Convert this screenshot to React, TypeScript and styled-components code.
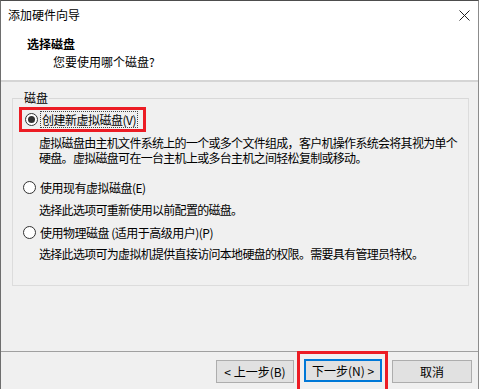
import React, { ReactElement } from "react";
import styled, { createGlobalStyle } from "styled-components";

const GlobalStyle = createGlobalStyle`
  html, body {
    margin: 0;
    padding: 0;
    background: #ffffff;
  }
  body {
    font-family: "Noto Sans CJK SC", "Liberation Sans", sans-serif;
    font-size: 12px;
    color: #000000;
  }
`;

const Window = styled.div`
  width: 479px;
  height: 389px;
  box-sizing: border-box;
  border-top: 1px solid #4d4d4d;
  border-left: 1px solid #6e6e6e;
  border-right: 1px solid #8c8c8c;
  background: #f0f0f0;
  display: flex;
  flex-direction: column;
  overflow: hidden;
`;

const Header = styled.div`
  background: #ffffff;
  height: 79px;
  flex-shrink: 0;
  display: flex;
  flex-direction: column;
  border-bottom: 2px solid #d5d5d5;
`;

const TitleBar = styled.div`
  height: 28px;
  display: flex;
  align-items: center;
  justify-content: space-between;
  padding: 0 8px 0 7px;
`;

const TitleText = styled.span`
  font-size: 12px;
  line-height: 14px;
`;

const CloseButton = styled.span`
  display: flex;
  width: 12px;
  height: 12px;
  align-items: center;
  justify-content: center;
`;

const HeaderTitle = styled.div`
  margin: 7px 0 0 26px;
  font-weight: bold;
  font-size: 12px;
  line-height: 16px;
`;

const HeaderSub = styled.div`
  margin: 2px 0 0 52px;
  font-size: 12px;
  line-height: 16px;
`;

const Body = styled.div`
  flex: 1;
  min-height: 0;
  padding: 9px 9px 0 11px;
`;

const Group = styled.fieldset`
  margin: 0;
  padding: 2px 0 0 6px;
  height: 195px;
  box-sizing: border-box;
  border: 1px solid #dcdcdc;
  border-top-color: #d8d8d8;
`;

const Legend = styled.legend`
  padding: 0 1px;
  margin-left: 4px;
  font-size: 12px;
  line-height: 14px;
`;

const Highlight = styled.div`
  display: inline-flex;
  border: 3px solid #ec1c24;
  padding: 1px 6px 1px 3px;
`;

const Option = styled.label<{ $gap: number }>`
  display: flex;
  align-items: center;
  gap: 3px;
  height: 17px;
  margin-top: ${(p) => p.$gap}px;
  margin-left: ${(p) => (p.$gap === 0 ? 0 : 4)}px;
  font-size: 12px;
  letter-spacing: -0.5px;
  cursor: default;
`;

const Radio = styled.span<{ $checked: boolean }>`
  width: 11px;
  height: 11px;
  border: 1px solid #333333;
  border-radius: 50%;
  background: #ffffff;
  display: flex;
  align-items: center;
  justify-content: center;
  flex-shrink: 0;
  &::after {
    content: "";
    width: 7px;
    height: 7px;
    border-radius: 50%;
    background: ${(p) => (p.$checked ? "#333333" : "transparent")};
  }
`;

const OptionText = styled.span<{ $focused?: boolean }>`
  line-height: 15px;
  padding: 0 1px;
  outline: ${(p) => (p.$focused ? "1px dotted #444" : "none")};
`;

const Description = styled.div<{ $gap: number }>`
  margin: ${(p) => p.$gap}px 0 0 20px;
  font-size: 12px;
  line-height: 15px;
  letter-spacing: -0.7px;
  white-space: nowrap;
`;

const Footer = styled.div`
  height: 38px;
  box-sizing: border-box;
  flex-shrink: 0;
  border-top: 1px solid #a0a0a0;
  display: flex;
  align-items: flex-start;
  justify-content: flex-end;
  padding: 8px 6px 0 0;
`;

const Button = styled.button<{ $default?: boolean; $width?: number }>`
  width: ${(p) => p.$width ?? 78}px;
  height: 23px;
  flex-shrink: 0;
  box-sizing: border-box;
  background: #e1e1e1;
  border: 1px solid ${(p) => (p.$default ? "#0078d7" : "#adadad")};
  box-shadow: ${(p) => (p.$default ? "inset 0 0 0 1px #0078d7" : "none")};
  font-family: "Noto Sans CJK SC", "Liberation Sans", sans-serif;
  font-size: 12px;
  color: #000;
  padding: 0;
`;

const ButtonMark = styled.div`
  border: 3px solid #ec1c24;
  padding: 5px 3px 8px 4px;
  margin: -9px 4px 0 3px;
  display: flex;
  flex-shrink: 0;
`;

interface RadioOptionProps {
  label: string;
  checked?: boolean;
  gap: number;
}

const RadioOption = ({ label, checked = false, gap }: RadioOptionProps): ReactElement => (
  <Option $gap={gap}>
    <Radio $checked={checked} />
    <OptionText $focused={checked}>{label}</OptionText>
  </Option>
);

const App = (): ReactElement => (
  <>
    <GlobalStyle />
    <Window>
      <Header>
        <TitleBar>
          <TitleText>添加硬件向导</TitleText>
          <CloseButton>
            <svg width="11" height="11" viewBox="0 0 11 11">
              <path d="M0.5 0.5 L10.5 10.5 M10.5 0.5 L0.5 10.5" stroke="#222" strokeWidth="1" />
            </svg>
          </CloseButton>
        </TitleBar>
        <HeaderTitle>选择磁盘</HeaderTitle>
        <HeaderSub>您要使用哪个磁盘?</HeaderSub>
      </Header>
      <Body>
        <Group>
          <Legend>磁盘</Legend>
          <Highlight>
            <RadioOption label="创建新虚拟磁盘(V)" checked gap={0} />
          </Highlight>
          <Description $gap={3}>
            虚拟磁盘由主机文件系统上的一个或多个文件组成，客户机操作系统会将其视为单个
            <br />
            硬盘。虚拟磁盘可在一台主机上或多台主机之间轻松复制或移动。
          </Description>
          <RadioOption label="使用现有虚拟磁盘(E)" gap={14} />
          <Description $gap={6}>选择此选项可重新使用以前配置的磁盘。</Description>
          <RadioOption label="使用物理磁盘 (适用于高级用户)(P)" gap={7} />
          <Description $gap={5}>选择此选项可为虚拟机提供直接访问本地硬盘的权限。需要具有管理员特权。</Description>
        </Group>
      </Body>
      <Footer>
        <Button>&lt; 上一步(B)</Button>
        <ButtonMark>
          <Button $default>下一步(N) &gt;</Button>
        </ButtonMark>
        <Button $width={80}>取消</Button>
      </Footer>
    </Window>
  </>
);

export default App;
